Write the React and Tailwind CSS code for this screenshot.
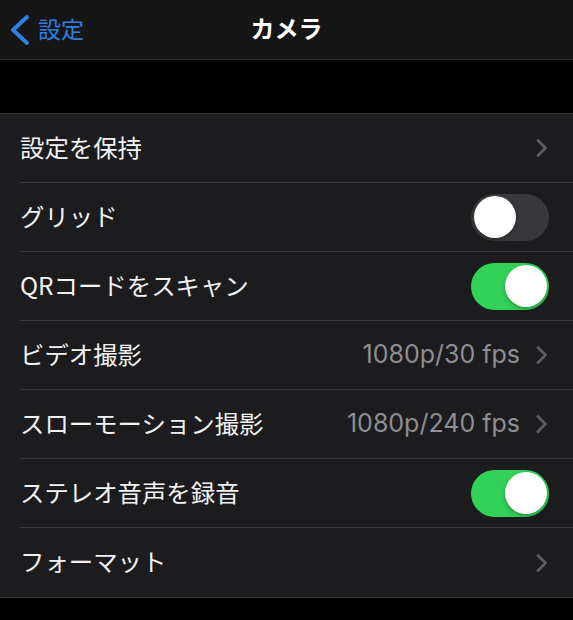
const rows = [
  { label: '設定を保持', type: 'link' },
  { label: 'グリッド', type: 'toggle', on: false },
  { label: 'QRコードをスキャン', type: 'toggle', on: true },
  { label: 'ビデオ撮影', type: 'link', value: '1080p/30 fps' },
  { label: 'スローモーション撮影', type: 'link', value: '1080p/240 fps' },
  { label: 'ステレオ音声を録音', type: 'toggle', on: true },
  { label: 'フォーマット', type: 'link' },
];

function Toggle({ on }) {
  return (
    <div
      className={`w-[78px] h-[47px] rounded-full p-[2.5px] flex items-center ${
        on ? 'bg-[#32d158] justify-end' : 'bg-[#39393d] justify-start'
      }`}
    >
      <div className="w-[42px] h-[42px] rounded-full bg-white shadow-[0_2px_4px_rgba(0,0,0,0.3)]" />
    </div>
  );
}

function Chevron() {
  return (
    <svg width="14" height="22" viewBox="0 0 14 22" fill="none" className="shrink-0">
      <path d="M3 3.5 L10.5 11 L3 18.5" stroke="#5c5c60" strokeWidth="3" strokeLinecap="round" strokeLinejoin="round" />
    </svg>
  );
}

export default function App() {
  return (
    <div
      className="w-[573px] h-[620px] bg-black text-[#f2f2f3] overflow-hidden"
      style={{ fontFamily: '"Noto Sans CJK JP", "Noto Sans", sans-serif' }}
    >
      <header className="h-[60px] bg-[#161616] border-b border-[#2a2a2c] flex items-center relative">
        <div className="flex items-center pl-[9px] gap-[7px] text-[#2f80e6] text-[23px]">
          <svg width="22" height="32" viewBox="0 0 22 32" fill="none">
            <path d="M18 3 L4 16 L18 29" stroke="#2f80e6" strokeWidth="4" strokeLinecap="round" strokeLinejoin="round" />
          </svg>
          <span className="pb-[3px]">設定</span>
        </div>
        <div className="absolute left-1/2 -translate-x-1/2 text-[24px] font-bold text-white pb-[3px]">
          カメラ
        </div>
      </header>

      <div className="h-[53px]" />

      <div className="bg-[#1c1c1e] border-t border-[#38383a] border-b">
        {rows.map((r, i) => (
          <div key={r.label} className="pl-[20px]">
            <div
              className={`h-[69px] flex items-center pr-[24px] ${
                i < rows.length - 1 ? 'border-b border-[#38383a]' : ''
              }`}
            >
              <span className="text-[24.4px] flex-1 pb-[2px]">{r.label}</span>
              {r.type === 'toggle' ? (
                <Toggle on={r.on} />
              ) : (
                <div className="flex items-center gap-[15px]">
                  {r.value && (
                    <span className="text-[25px] text-[#8e8e93] pb-[1px]" style={{ fontFamily: 'Inter, "Noto Sans CJK JP", sans-serif' }}>
                      {r.value}
                    </span>
                  )}
                  <Chevron />
                </div>
              )}
            </div>
          </div>
        ))}
      </div>
    </div>
  );
}
